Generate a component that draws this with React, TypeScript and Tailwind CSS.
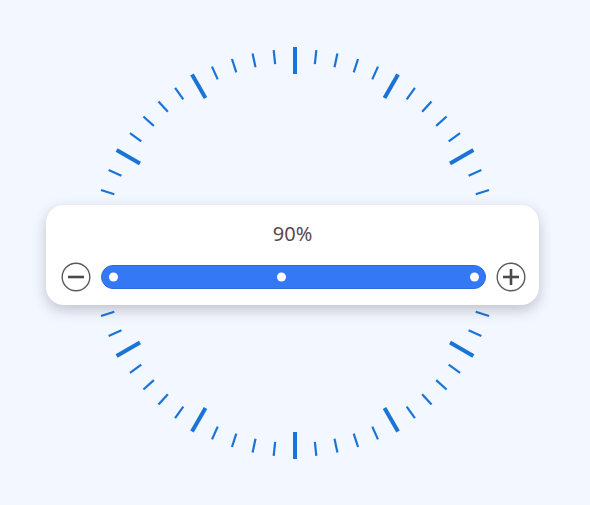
import React from "react";

const CX = 295;
const CY = 253;

function Dial() {
  const ticks = Array.from({ length: 60 }, (_, i) => {
    const long = i % 5 === 0;
    const a = (i * 6 * Math.PI) / 180;
    const r1 = long ? 179 : 190;
    const r2 = long ? 206 : 204;
    const s = Math.sin(a);
    const c = Math.cos(a);
    return (
      <line
        key={i}
        x1={CX + r1 * s}
        y1={CY - r1 * c}
        x2={CX + r2 * s}
        y2={CY - r2 * c}
        stroke="#1a74d6"
        strokeWidth={long ? 4 : 2.2}
      />
    );
  });
  return (
    <svg width="590" height="505" viewBox="0 0 590 505" className="block">
      {ticks}
    </svg>
  );
}

function RoundIcon({ plus }: { plus?: boolean }) {
  return (
    <svg width="30" height="30" viewBox="0 0 30 30" className="block shrink-0">
      <circle cx="15" cy="15" r="13.8" fill="none" stroke="#5a5a5a" strokeWidth="1.4" />
      <line x1="7" y1="15" x2="23" y2="15" stroke="#4a4a4a" strokeWidth="2.6" />
      {plus && <line x1="15" y1="7" x2="15" y2="23" stroke="#4a4a4a" strokeWidth="2.6" />}
    </svg>
  );
}

export default function App() {
  return (
    <div
      className="grid w-[590px] h-[505px] bg-[#f3f7ff] overflow-hidden"
      style={{ fontFamily: '"Noto Sans", "Open Sans", sans-serif' }}
    >
      <div className="[grid-area:1/1]">
        <Dial />
      </div>
      <div className="[grid-area:1/1] pt-[205px] pl-[46px]">
        <div className="w-[493px] h-[100px] bg-white rounded-[18px] shadow-[0_5px_14px_rgba(60,60,80,0.28)] flex flex-col">
          <div className="pt-[17px] text-center text-[20px] leading-[24px] text-[#5a4a4a]">90%</div>
          <div className="mt-[16px] flex items-center pl-[15px]">
            <RoundIcon />
            <div className="ml-[10px] relative w-[385px] h-[24px] rounded-full bg-[#3478f6] border border-[#2d6ae0]">
              <span className="absolute top-1/2 -translate-y-1/2 left-[7px] w-[9px] h-[9px] rounded-full bg-white" />
              <span className="absolute top-1/2 -translate-y-1/2 left-[175px] w-[9px] h-[9px] rounded-full bg-white" />
              <span className="absolute top-1/2 -translate-y-1/2 left-[368px] w-[9px] h-[9px] rounded-full bg-white" />
            </div>
            <div className="ml-[10px]">
              <RoundIcon plus />
            </div>
          </div>
        </div>
      </div>
    </div>
  );
}
